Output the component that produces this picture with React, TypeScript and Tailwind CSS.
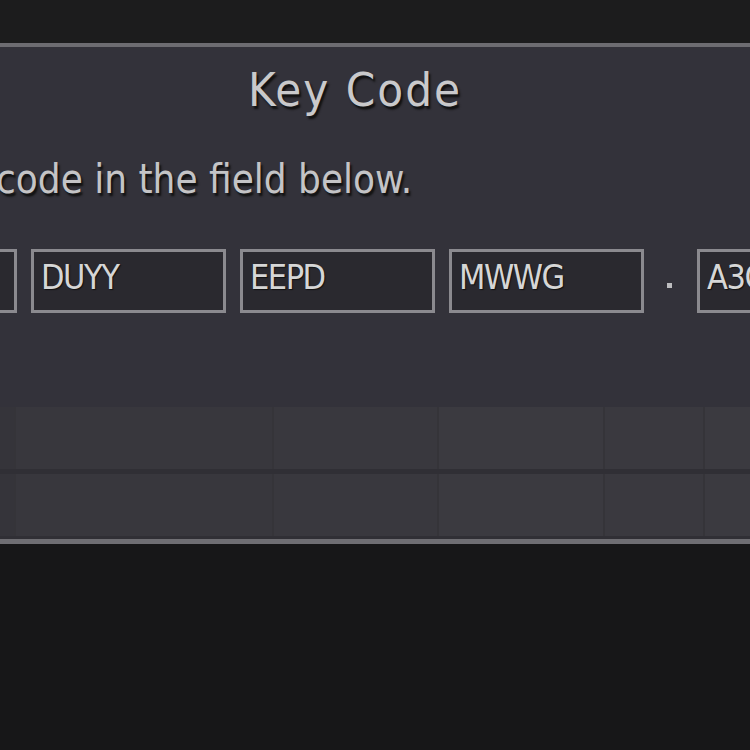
const fields = ["", "DUYY", "EEPD", "MWWG"];

function Field({ value }: { value: string }) {
  return (
    <div className="w-[195px] h-[64px] shrink-0 border-[3px] border-[#8b8a8f] bg-[#2a292f] flex items-center pl-[7px] pb-[9px]">
      <span className="text-[34px] leading-none text-[#d6d6d6] tracking-[-1.5px] [text-shadow:1px_1px_1px_#111]">{value}</span>
    </div>
  );
}

export default function App() {
  return (
    <div
      className="w-[750px] h-[750px] overflow-hidden bg-[#1b1b1c] flex flex-col"
      style={{ fontFamily: '"DejaVu Sans Condensed", "DejaVu Sans", sans-serif' }}
    >
      <div className="h-[43px] shrink-0 bg-[#1c1c1d]" />
      <div className="shrink-0 border-t-[4px] border-b-[5px] border-t-[#6d6c71] border-b-[#6f6e73] bg-[#33323a] flex flex-col">
        <h1 className="text-center text-[47px] leading-none text-[#c9c9cb] pt-[19px] mr-[40px] tracking-[2px] [text-shadow:2px_3px_2px_#111]">
          Key Code
        </h1>
        <p className="ml-[-4px] mt-[46px] whitespace-nowrap text-[40px] leading-none text-[#c4c4c6] [text-shadow:2px_3px_2px_#111]">
          code in the field below.
        </p>
        <div className="flex items-center gap-[14px] ml-[-178px] mt-[50px]">
          {fields.map((f, i) => (
            <Field key={i} value={f} />
          ))}
          <div className="w-[25px] shrink-0 flex justify-center">
            <span className="block w-[5px] h-[5px] bg-[#bdbdbf] mt-[8px] mr-[3px]" />
          </div>
          <Field value="A3C" />
        </div>
        <div className="mt-[94px] flex flex-col gap-[5px] bg-[#302f35] pb-[3px]">
          {[0, 1].map((r) => (
            <div key={r} className="h-[62px] flex gap-[2px] bg-[#353439]">
              <div className="w-[14px] bg-[#35343a]" />
              <div className="w-[256px] bg-[#38373d]" />
              <div className="w-[163px] bg-[#39383e]" />
              <div className="w-[164px] bg-[#3b3a40]" />
              <div className="w-[98px] bg-[#3a393f]" />
              <div className="flex-1 bg-[#3b3a40]" />
            </div>
          ))}
        </div>
      </div>
      <div className="flex-1 bg-[#171718]" />
    </div>
  );
}
